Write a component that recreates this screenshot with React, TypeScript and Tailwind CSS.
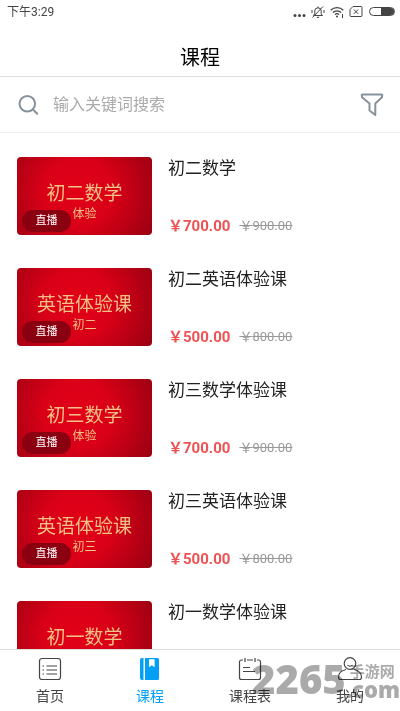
import type { ReactNode } from "react";

type Course = {
  title: string;
  cover: string;
  sub: string;
  price: string;
  oldPrice: string;
};

const courses: Course[] = [
  { title: "初二数学", cover: "初二数学", sub: "体验", price: "700.00", oldPrice: "900.00" },
  { title: "初二英语体验课", cover: "英语体验课", sub: "初二", price: "500.00", oldPrice: "800.00" },
  { title: "初三数学体验课", cover: "初三数学", sub: "体验", price: "700.00", oldPrice: "900.00" },
  { title: "初三英语体验课", cover: "英语体验课", sub: "初三", price: "500.00", oldPrice: "800.00" },
  { title: "初一数学体验课", cover: "初一数学", sub: "体验", price: "700.00", oldPrice: "900.00" },
];

const StatusBar = () => (
  <div className="flex h-6 shrink-0 items-center justify-between pr-1 pl-[7px] text-[#444]">
    <span className="text-xs">下午3:29</span>
    <div className="flex items-center gap-[5px]">
      <svg width="13" height="14" viewBox="0 0 13 14" fill="currentColor">
        <circle cx="2" cy="10.5" r="1.5" />
        <circle cx="6.5" cy="10.5" r="1.5" />
        <circle cx="11" cy="10.5" r="1.5" />
      </svg>
      <svg width="14" height="14" viewBox="0 0 14 14" fill="none" stroke="currentColor" strokeWidth="1">
        <path d="M2.5 10.5h9l-1.300-1.600V6a3.200 3.200 0 0 0-6.400 0v2.900zM7 2.800V1.500M5.800 12.300h2.400M1.500 12.500 12 1.500M1 5v3M13 5v3" />
      </svg>
      <svg width="14" height="14" viewBox="0 0 14 14" fill="none" stroke="currentColor" strokeWidth="1.300">
        <path d="M.7 5.200a9 9 0 0 1 12.600 0M2.800 7.500a6 6 0 0 1 8.400 0M4.900 9.600a3 3 0 0 1 4.200 0" />
        <circle cx="7" cy="11.400" r="1" fill="currentColor" stroke="none" />
        <path d="M12.500 9v4" strokeWidth="1" />
      </svg>
      <svg width="14" height="14" viewBox="0 0 14 14" fill="none" stroke="currentColor" strokeWidth="1">
        <path d="M4 1.500h8a1 1 0 0 1 1 1v8a1 1 0 0 1-1 1H2a1 1 0 0 1-1-1V4.500zM4.800 4.500l4.400 4.400M9.200 4.500 4.800 8.900" />
      </svg>
      <svg width="28" height="14" viewBox="0 0 28 14">
        <rect x="1.500" y="2.500" width="25" height="8" rx="4" fill="none" stroke="currentColor" />
        <path d="M13 3h9.500a3.500 3.500 0 0 1 0 7H13z" fill="currentColor" />
      </svg>
    </div>
  </div>
);

const SearchBar = () => (
  <form className="flex h-14 shrink-0 items-center border-b border-[#eee] pr-4 pl-[17px]">
    <label htmlFor="keyword" aria-label="搜索">
      <svg width="22" height="22" viewBox="0 0 22 22" fill="none" stroke="#87919b" strokeWidth="2" strokeLinecap="round">
        <circle cx="10.300" cy="9.800" r="7.800" />
        <path d="m16.200 15.800 4 4" />
      </svg>
    </label>
    <input
      id="keyword"
      type="text"
      placeholder="输入关键词搜索"
      className="ml-[14px] min-w-0 flex-1 text-[#333] outline-none placeholder:text-[#aaa]"
    />
    <button type="button" aria-label="筛选">
      <svg width="24" height="24" viewBox="0 0 24 24" fill="none" stroke="#87919b" strokeWidth="2" strokeLinejoin="round">
        <path d="M2.500 1.500h19c.8 0 1 .9.500 1.600v1.200L15.300 10.500V22l-5.800-4.500v-7L2 4.300V3.100c-.5-.7-.3-1.600.5-1.600z" />
      </svg>
    </button>
  </form>
);

const CourseCard = ({ course }: { course: Course }) => (
  <li>
    <a href="#course" className="flex gap-4">
      <div className="relative flex h-[78px] w-[135px] shrink-0 flex-col items-center rounded bg-[radial-gradient(circle_at_45%_45%,#e20018_0%,#d90017_40%,#a90013_85%,#980011_100%)] pt-6 text-[#f3c185]">
        <span className="text-[19px] leading-[26px]">{course.cover}</span>
        <span className="text-xs leading-[14px]">{course.sub}</span>
        <span className="absolute bottom-[3px] left-[5px] flex h-[22px] w-[49px] items-center justify-center rounded-full bg-[#8a0011] text-[11px] text-white">
          直播
        </span>
      </div>
      <div className="flex min-w-0 flex-1 flex-col justify-between">
        <h2 className="truncate text-[17px] leading-[22px] text-[#222]">{course.title}</h2>
        <p className="flex items-center gap-[9px] leading-[18px]">
          <span className="text-[15px] font-bold text-[#ee5253]">￥{course.price}</span>
          <del className="text-[13px] text-[#999]">￥{course.oldPrice}</del>
        </p>
      </div>
    </a>
  </li>
);

const NavItem = ({ label, active, children }: { label: string; active?: boolean; children: ReactNode }) => (
  <a
    href="#nav"
    className={`flex flex-1 flex-col items-center gap-1 pt-[6px] text-sm leading-5 ${active ? "text-[#03a0f5]" : "text-[#444]"}`}
  >
    <svg width="26" height="26" viewBox="0 0 26 26" fill="none" stroke="currentColor" strokeWidth="1.200">
      {children}
    </svg>
    {label}
  </a>
);

const BottomNav = () => (
  <nav className="relative flex h-[62px] shrink-0 border-t border-[#ddd]">
    <NavItem label="首页">
      <rect x="2.500" y="2.500" width="21" height="21" rx="2.500" />
      <path d="M9.500 10H20M9.500 14H20M9.500 18H20M5.500 10H7M5.500 14H7M5.500 18H7" />
    </NavItem>
    <NavItem label="课程" active>
      <path
        d="M5 2h1.500v22H5a2 2 0 0 1-2-2V4a2 2 0 0 1 2-2zM8 2h12.500a1.500 1.500 0 0 1 1.500 1.500v19a1.500 1.500 0 0 1-1.500 1.500H8zM12 3.200v8l2.800-2 2.800 2v-8z"
        fill="currentColor"
        fillRule="evenodd"
        stroke="none"
      />
    </NavItem>
    <NavItem label="课程表">
      <path d="M6 4H4.500a2 2 0 0 0-2 2v15.500a2 2 0 0 0 2 2h17a2 2 0 0 0 2-2V6a2 2 0 0 0-2-2H20M10 4h6M8 2v4M18 2v4M6 11.500h7M6 15.500h12" />
    </NavItem>
    <NavItem label="我的">
      <circle cx="13" cy="7.500" r="5.800" />
      <path d="M9 13.500c-4 1-7.500 3.500-7.500 7.500 0 1.500.8 2.500 2 2.500h19c1.200 0 2-1 2-2.500 0-4-3.500-6.500-7.500-7.500M10.500 9c1.200 1.500 3.800 1.500 5 0" />
    </NavItem>
    <div className="pointer-events-none absolute right-0 bottom-3 flex items-end font-['Open_Sans','Noto_Sans_CJK_SC',sans-serif] font-extrabold text-[#aaa] mix-blend-multiply">
      <span className="text-[40px] leading-[40px]">2265</span>
      <span className="flex flex-col">
        <span className="pl-1 text-[15px] leading-4 font-bold">手游网</span>
        <span className="text-[22px] leading-5">.com</span>
      </span>
    </div>
  </nav>
);

export default function App() {
  return (
    <div className="flex h-dvh flex-col bg-white font-[Roboto,'Noto_Sans_CJK_SC',sans-serif]">
      <StatusBar />
      <header className="flex h-[53px] shrink-0 items-center justify-center border-b border-[#ddd] pt-4">
        <h1 className="text-xl text-black">课程</h1>
      </header>
      <SearchBar />
      <main className="min-h-0 flex-1 overflow-hidden px-[17px] pt-6">
        <ul className="flex flex-col gap-[33px]">
          {courses.map((course) => (
            <CourseCard key={course.title} course={course} />
          ))}
        </ul>
      </main>
      <BottomNav />
    </div>
  );
}
